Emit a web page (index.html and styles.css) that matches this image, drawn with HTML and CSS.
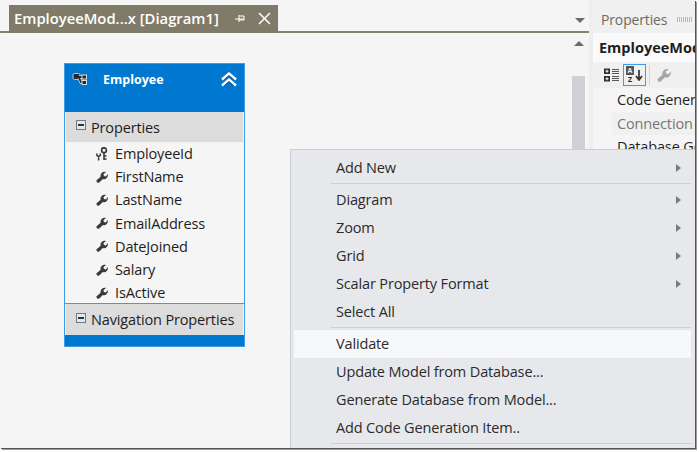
FILE: index.html
```html
<!DOCTYPE html>
<html lang="en">
<head>
    <meta charset="UTF-8">
    <title>EmployeeModel Diagram</title>
    <link rel="stylesheet" href="styles.css">
</head>
<body>
    <svg width="0" height="0" class="defs">
        <symbol id="wrench" viewBox="0 0 12 12">
            <path d="M0.3 9.6 L4.6 5.8 C4 3 6.4 0.2 10 1 L7.4 3.2 L8 5 L9.8 5.4 L11.8 3 C12.4 6.4 9.6 9 6.8 8 L3 11.8 L1 11.6 Z" fill="#3a3a3a"/>
        </symbol>
    </svg>

    <div class="workspace">
        <!-- document area -->
        <div class="document">
            <div class="tabstrip">
                <div class="tab">
                    <span class="tab-title">EmployeeMod...x [Diagram1]</span>
                    <svg class="tab-pin" width="11" height="11" viewBox="0 0 11 11"><path d="M0 6 H4 M4 2 V9 M4 3 H9 V7 H4 M4 6 H9" stroke="#fff" fill="none"/></svg>
                    <svg class="tab-close" width="13" height="13" viewBox="0 0 13 13"><path d="M1 1 L12 12 M12 1 L1 12" stroke="#fff" stroke-width="1.5"/></svg>
                </div>
                <div class="tab-drop"></div>
            </div>
            <div class="entity">
                <div class="entity-head">
                    <svg class="entity-icon" width="16" height="15" viewBox="0 0 16 15">
                        <rect x="1" y="1.5" width="7" height="6" rx="1.5" fill="#26282c" stroke="#b9c6d2"/>
                        <path d="M7 5 L11 5 M7 6 L9 10 L12 10" fill="none" stroke="#d5dde5" stroke-width="3.4"/>
                        <path d="M7 5 L11 5 M7 6 L9 10 L12 10" fill="none" stroke="#26282c" stroke-width="1.8"/>
                        <rect x="10" y="3" width="4.5" height="4" fill="#26282c" stroke="#d5dde5"/>
                        <rect x="10" y="8.5" width="4.5" height="4" fill="#26282c" stroke="#d5dde5"/>
                    </svg>
                    <span class="entity-name">Employee</span>
                    <svg class="entity-collapse" width="16" height="16" viewBox="0 0 16 16">
                        <path d="M1 7.5 L8 1.5 L15 7.5 M1 13.5 L8 7.5 L15 13.5" fill="none" stroke="#fff" stroke-width="2.4"/>
                        <path d="M3.5 7.5 L8 3.8 L12.5 7.5 M3.5 13.5 L8 9.8 L12.5 13.5" fill="none" stroke="#1a3a5c" stroke-width="0.8"/>
                    </svg>
                </div>
                <div class="section-head"><span class="toggle"></span>Properties</div>
                <ul class="prop-list">
                    <li>
                        <svg class="prop-icon" width="12" height="14" viewBox="0 0 12 14">
                            <circle cx="8" cy="3.2" r="2.4" fill="none" stroke="#3a3a3a" stroke-width="1.7"/>
                            <path d="M8 5.5 V13 M8 9 H10.5 M8 12 H10.5" stroke="#3a3a3a" stroke-width="1.6" fill="none"/>
                            <path d="M0.8 6.5 L1 8.5 L2.6 9.6 L4.2 8.5 L4.4 6.5 M2.6 9 V13.5" stroke="#3a3a3a" stroke-width="1.5" fill="none"/>
                        </svg>EmployeeId</li>
                    <li><svg class="prop-icon" width="12" height="12"><use href="#wrench"/></svg>FirstName</li>
                    <li><svg class="prop-icon" width="12" height="12"><use href="#wrench"/></svg>LastName</li>
                    <li><svg class="prop-icon" width="12" height="12"><use href="#wrench"/></svg>EmailAddress</li>
                    <li><svg class="prop-icon" width="12" height="12"><use href="#wrench"/></svg>DateJoined</li>
                    <li><svg class="prop-icon" width="12" height="12"><use href="#wrench"/></svg>Salary</li>
                    <li><svg class="prop-icon" width="12" height="12"><use href="#wrench"/></svg>IsActive</li>
                </ul>
                <div class="section-head nav-head"><span class="toggle"></span>Navigation Properties</div>
                <div class="entity-foot"></div>
            </div>
            <div class="scrollbar">
                <div class="scroll-up"></div>
                <div class="scroll-thumb"></div>
            </div>
        </div>

        <!-- properties pane -->
        <div class="pane">
            <div class="pane-title">Properties<span class="grip"></span></div>
            <div class="pane-object">EmployeeModel</div>
            <div class="pane-tools">
                <svg class="tool" width="15" height="14" viewBox="0 0 15 14">
                    <path d="M0 0.5 H6 V6 H0 Z M0 8 H6 V13.5 H0 Z" fill="#2e2e2e"/>
                    <path d="M1.5 3.2 H4.5 M3 1.7 V4.7 M1.5 10.8 H4.5 M3 9.3 V12.3" stroke="#fff"/>
                    <path d="M8 1.5 H15 M8 3.5 H15 M8 5.5 H15 M8 8.5 H15 M8 10.5 H15 M8 12.5 H15" stroke="#555"/>
                </svg>
                <div class="tool-on">
                    <span class="az"><b class="az-a">A</b><b>Z</b></span>
                    <svg width="8" height="12" viewBox="0 0 8 12"><path d="M4 1 V10 M1 7 L4 11 L7 7" stroke="#333" stroke-width="1.7" fill="none"/></svg>
                </div>
                <span class="tool-sep"></span>
                <svg class="tool-wrench" width="14" height="14"><use href="#wrench"/></svg>
            </div>
            <div class="pane-rows">
                <div class="pane-row">Code Generation</div>
                <div class="pane-row muted">Connection</div>
                <div class="pane-row">Database Generation</div>
            </div>
        </div>

        <!-- context menu -->
        <div class="menu">
            <div class="item sub">Add New</div>
            <div class="sep"></div>
            <div class="item sub">Diagram</div>
            <div class="item sub">Zoom</div>
            <div class="item sub">Grid</div>
            <div class="item sub">Scalar Property Format</div>
            <div class="item">Select All</div>
            <div class="sep"></div>
            <div class="item hover">Validate</div>
            <div class="item">Update Model from Database...</div>
            <div class="item">Generate Database from Model...</div>
            <div class="item">Add Code Generation Item..</div>
            <div class="sep"></div>
        </div>
    </div>
</body>
</html>
```

FILE: styles.css
```css
html, body {
    margin: 0;
    height: 100%;
}
body {
    width: 699px;
    height: 452px;
    overflow: hidden;
    background: #fff;
    font-family: 'Open Sans', 'Noto Sans', Arial, sans-serif;
    color: #1e1e1e;
}
.defs {
    position: absolute;
}
.workspace {
    position: relative;
    display: flex;
    width: 695px;
    height: 448px;
    overflow: hidden;
    background: #f5f5f5;
}
/* dark edge along the right and bottom of the captured window */
body::after {
    content: "";
    position: absolute;
    left: 0;
    top: 0;
    width: 695px;
    height: 448px;
    box-shadow: 1px 1px 0 #55565a, 2px 2px 0 #9a9b9f;
}

/* document area */
.document {
    position: relative;
    width: 589px;
    flex: none;
}
.tabstrip {
    height: 33px;
    box-sizing: border-box;
    padding: 5px 0 0 9px;
    border-bottom: 2px solid #85816d;
    display: flex;
}
.tab {
    width: 269px;
    height: 28px;
    flex: none;
    box-sizing: border-box;
    background: #7f7b68;
    color: #fff;
    display: flex;
    align-items: center;
    padding: 0 0 2px 5px;
}
.tab-title {
    font-size: 14.8px;
    font-weight: 600;
    white-space: nowrap;
    width: 220px;
    flex: none;
}
.tab-pin {
    margin-left: 1px;
}
.tab-close {
    margin-left: 12px;
}
.tab-drop {
    position: absolute;
    right: 4px;
    top: 18px;
    border: 5px solid transparent;
    border-top: 5px solid #6a6a6a;
    border-bottom: 0;
}
.entity {
    position: absolute;
    left: 64px;
    top: 63px;
    width: 181px;
    box-sizing: border-box;
    border: 1px solid #3d9be9;
    background: #f5f5f5;
}
.entity-head {
    height: 48px;
    box-sizing: border-box;
    background: #0078d0;
    color: #fff;
    display: flex;
    align-items: flex-start;
    padding: 8px 7px 0 7px;
}
.entity-name {
    font-size: 12.5px;
    font-weight: 700;
    margin-left: 15px;
    line-height: 15px;
}
.entity-collapse {
    margin-left: auto;
}
.section-head {
    height: 30px;
    margin: 0 1px;
    background: #dcdcdc;
    display: flex;
    align-items: center;
    font-size: 14.5px;
    padding-left: 10px;
    letter-spacing: -0.01em;
}
.toggle {
    position: relative;
    width: 8px;
    height: 8px;
    margin-right: 5px;
    margin-top: -4px;
    background: #dfe7ef;
    border: 1px solid #6c7a89;
}
.toggle::after {
    content: "";
    position: absolute;
    left: 1px;
    right: 1px;
    top: 3px;
    height: 2px;
    background: #333;
}
.prop-list {
    list-style: none;
    margin: 0;
    padding: 0 0 1px;
    border-bottom: 1px solid #3d9be9;
    height: 162px;
    box-sizing: border-box;
}
.prop-list li {
    height: 23.2px;
    display: flex;
    align-items: center;
    padding-left: 31px;
    font-size: 14.5px;
    letter-spacing: -0.01em;
}
.prop-icon {
    width: 12px;
    margin-right: 7px;
    flex: none;
}
.nav-head {
    height: 31px;
}
.entity-foot {
    height: 11px;
    background: #0078d0;
}
.scrollbar {
    position: absolute;
    right: 2px;
    top: 33px;
    width: 17px;
    height: 415px;
}
.scroll-up {
    width: 0;
    margin: 8px auto 0;
    border: 5px solid transparent;
    border-bottom: 5px solid #6a6a6a;
    border-top: 0;
}
.scroll-thumb {
    margin: 30px 2px 0 2px;
    height: 300px;
    background: #d0d1d7;
}

/* properties pane */
.pane {
    flex: 1;
    min-width: 0;
    border-left: 4px solid #eeeef0;
    overflow: hidden;
}
.pane-title {
    height: 33px;
    box-sizing: border-box;
    padding: 5px 0 0 8px;
    display: flex;
    align-items: center;
    font-size: 14px;
    color: #6d6a5e;
    letter-spacing: -0.01em;
    white-space: nowrap;
    background: #f0f0f0;
}
.grip {
    width: 16px;
    height: 5px;
    margin-left: 10px;
    background: repeating-linear-gradient(90deg, #b9b9b9 0 1px, transparent 1px 2px);
}
.pane-object {
    height: 29px;
    line-height: 29px;
    padding-left: 6px;
    font-size: 14.5px;
    font-weight: 700;
    white-space: nowrap;
    background: #fafafa;
}
.pane-tools {
    height: 26px;
    box-sizing: border-box;
    display: flex;
    align-items: center;
    padding-left: 11px;
    background: #f0f0f0;
}
.tool {
    flex: none;
}
.tool-on {
    flex: none;
    width: 21px;
    height: 20px;
    margin-left: 4px;
    border: 1px solid #3d9be9;
    display: flex;
    align-items: center;
    justify-content: center;
    gap: 1px;
}
.az {
    display: flex;
    flex-direction: column;
    align-items: center;
    font-size: 7px;
    line-height: 9px;
    color: #222;
}
.az-a {
    width: 8px;
    text-align: center;
    background: #555;
    color: #eee;
}
.tool-sep {
    width: 1px;
    height: 20px;
    flex: none;
    margin: 0 7px 0 3px;
    background: #d6d6d6;
}
.tool-wrench {
    flex: none;
    opacity: 0.4;
}
.pane-rows {
    padding-left: 19px;
}
.pane-row {
    height: 23.7px;
    line-height: 24px;
    font-size: 14.5px;
    padding-left: 5px;
    white-space: nowrap;
    letter-spacing: -0.01em;
}
.muted {
    color: #77776f;
    background: #f0f0f0;
}

/* context menu */
.menu {
    position: absolute;
    left: 290px;
    top: 149px;
    width: 405px;
    height: 299px;
    box-sizing: border-box;
    padding: 4px 4px 0 3px;
    background: #e7e8ec;
    border: 1px solid #cbcdda;
    border-right: 0;
    border-bottom: 0;
    font-size: 14.5px;
    color: #2b2b2b;
}
.item {
    position: relative;
    height: 28px;
    line-height: 28px;
    padding-left: 42px;
    letter-spacing: -0.01em;
}
.item.sub::after {
    content: "";
    position: absolute;
    right: 10px;
    top: 10px;
    border: 4px solid transparent;
    border-left: 5px solid #7a7a7a;
    border-right: 0;
}
.item.hover {
    background: #f7f8fa;
}
.sep {
    height: 1px;
    margin: 1px 0 2px 37px;
    background: #cccedb;
}
```
